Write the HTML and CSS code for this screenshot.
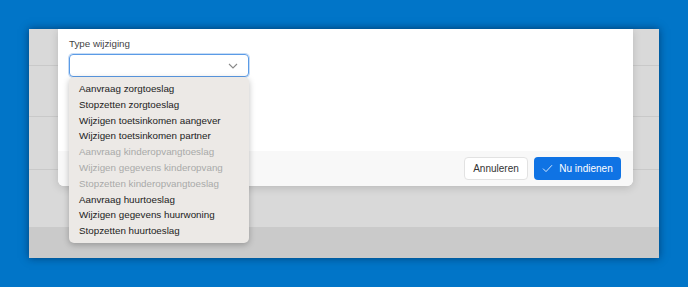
FILE: index.html
```html
<!DOCTYPE html>
<html lang="nl">
<head>
    <meta charset="UTF-8">
    <title>Type wijziging</title>
    <link rel="stylesheet" href="styles.css">
</head>
<body>
    <div class="window">
        <div class="rows">
            <div class="row row-1"></div>
            <div class="row row-2"></div>
            <div class="row row-3"></div>
            <div class="row row-4"></div>
            <div class="row-bottom"></div>
        </div>
        <div class="dialog">
            <div class="dialog-body">
                <label class="field-label">Type wijziging</label>
                <div class="select">
                    <svg class="chevron" width="10" height="6" viewBox="0 0 10 6"><path d="M1 1l4 4 4-4" fill="none" stroke="#8a8a8a" stroke-width="1.1"/></svg>
                </div>
            </div>
            <div class="dialog-footer">
                <button class="button button-secondary">Annuleren</button>
                <button class="button button-primary">
                    <svg width="11" height="9" viewBox="0 0 11 9"><path d="M1 4.6l3 3L10 1.2" fill="none" stroke="#d4e6fb" stroke-width="1"/></svg>
                    Nu indienen
                </button>
            </div>
        </div>
        <ul class="menu">
            <li>Aanvraag zorgtoeslag</li>
            <li>Stopzetten zorgtoeslag</li>
            <li>Wijzigen toetsinkomen aangever</li>
            <li>Wijzigen toetsinkomen partner</li>
            <li class="disabled">Aanvraag kinderopvangtoeslag</li>
            <li class="disabled">Wijzigen gegevens kinderopvang</li>
            <li class="disabled">Stopzetten kinderopvangtoeslag</li>
            <li>Aanvraag huurtoeslag</li>
            <li>Wijzigen gegevens huurwoning</li>
            <li>Stopzetten huurtoeslag</li>
        </ul>
    </div>
</body>
</html>
```

FILE: styles.css
```css
body {
    margin: 0;
    background-color: #0175c8;
    font-family: 'Liberation Sans', Arial, sans-serif;
    color: #333;
    width: 688px;
    height: 287px;
    overflow: hidden;
    padding: 29px 0 0 29px;
    box-sizing: border-box;
}
.window {
    position: relative;
    width: 630px;
    height: 229px;
    background-color: #d9d9d9;
    box-shadow: 0 0 8px rgba(0, 20, 50, 0.55);
}
.rows {
    display: flex;
    flex-direction: column;
    height: 100%;
}
.row {
    border-bottom: 1px solid #c9c9c9;
}
.row-1 { height: 36px; }
.row-2 { height: 50px; }
.row-3 { height: 52px; }
.row-4 { flex: 1; border-bottom: none; }
.row-bottom {
    height: 31px;
    background-color: #cacaca;
}
.dialog {
    position: absolute;
    left: 29px;
    top: 0;
    width: 575px;
    height: 157px;
    background-color: white;
    border-radius: 0 0 6px 6px;
    box-shadow: 0 2px 8px rgba(0, 0, 0, 0.15);
    display: flex;
    flex-direction: column;
    overflow: hidden;
}
.dialog-body {
    flex: 1;
    padding: 9px 11px 0;
}
.field-label {
    display: block;
    font-size: 9.8px;
    color: #444;
    margin-bottom: 4px;
    line-height: 12px;
}
.select {
    width: 180px;
    height: 23px;
    box-sizing: border-box;
    border: 1px solid #5b9be6;
    border-radius: 4px;
    box-shadow: 0 0 0 1px rgba(91, 155, 230, 0.35);
    display: flex;
    align-items: center;
    justify-content: flex-end;
    padding-right: 10px;
}
.dialog-footer {
    height: 35px;
    background-color: #f8f8f8;
    display: flex;
    align-items: center;
    justify-content: flex-end;
    gap: 6px;
    padding: 0 12px 0 0;
}
.button {
    font-family: 'Liberation Sans', Arial, sans-serif;
    font-size: 10px;
    height: 23px;
    border-radius: 4px;
    padding: 0;
    cursor: pointer;
    display: flex;
    align-items: center;
    justify-content: center;
    gap: 6px;
    white-space: nowrap;
}
.button-secondary {
    background-color: white;
    border: 1px solid #e2e2e2;
    color: #333;
    width: 64px;
}
.button-primary {
    background-color: #0f73e4;
    border: none;
    color: white;
    width: 87px;
}
.menu {
    position: absolute;
    left: 40px;
    top: 48px;
    width: 180px;
    margin: 0;
    padding: 4px 0;
    box-sizing: border-box;
    list-style: none;
    background-color: #ece9e6;
    border-radius: 5px;
    box-shadow: 0 2px 6px rgba(0, 0, 0, 0.25);
}
.menu li {
    font-size: 9.8px;
    line-height: 15.8px;
    padding-left: 10px;
    color: #222;
}
.menu li.disabled {
    color: #a9a9a9;
}
```
